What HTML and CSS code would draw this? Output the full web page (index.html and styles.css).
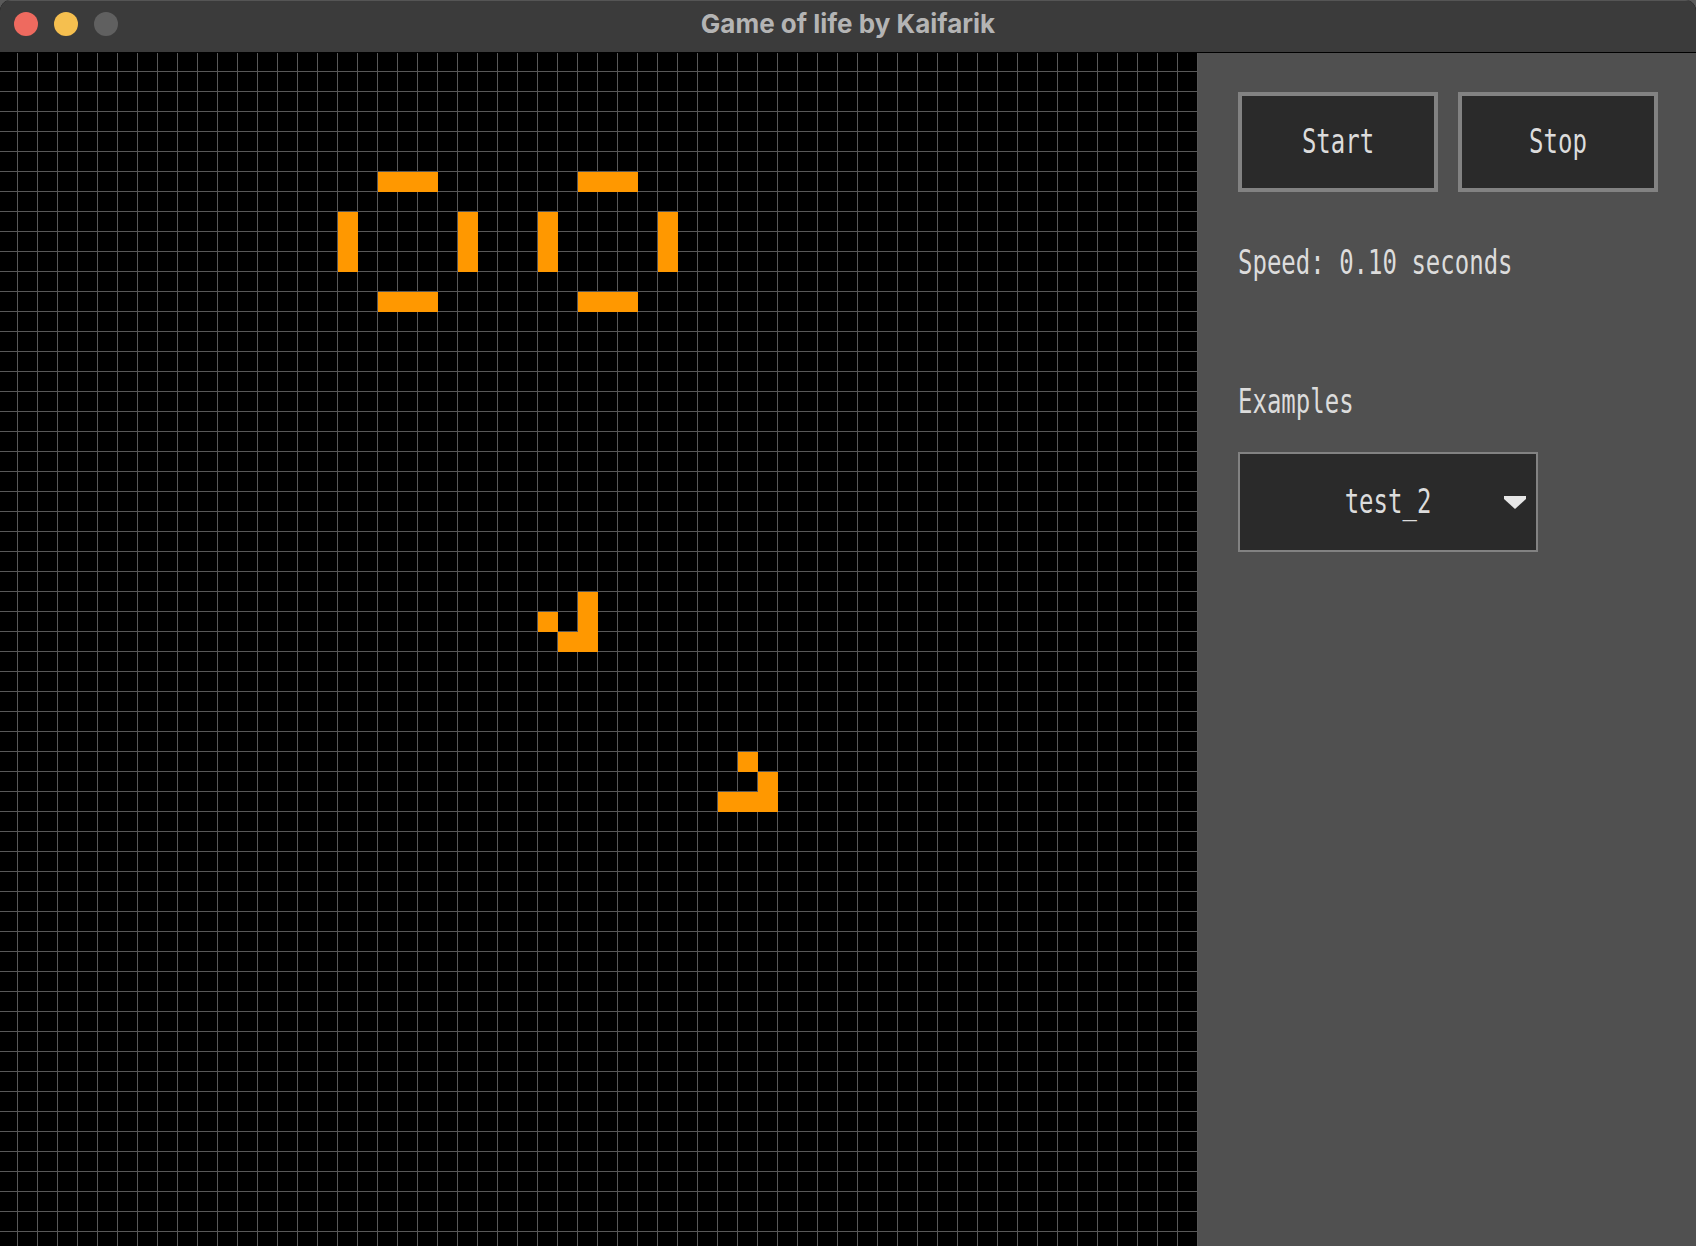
FILE: index.html
```html
<!DOCTYPE html>
<html>
<head>
<meta charset="utf-8">
<title>Game of life by Kaifarik</title>
<link rel="stylesheet" href="styles.css">
</head>
<body>
<div class="window">
  <div class="titlebar">
    <div class="lights">
      <span class="light red"></span>
      <span class="light yellow"></span>
      <span class="light gray"></span>
    </div>
    <div class="title">Game of life by Kaifarik</div>
  </div>
  <div class="content">
    <div class="board">
      <svg class="cells" width="1198" height="1193" viewBox="0 0 1198 1193">
        <g fill="#ff9800">
          <!-- left oscillator -->
          <rect x="378" y="119" width="60" height="20"/>
          <rect x="338" y="159" width="20" height="60"/>
          <rect x="458" y="159" width="20" height="60"/>
          <rect x="378" y="239" width="60" height="20"/>
          <!-- right oscillator -->
          <rect x="578" y="119" width="60" height="20"/>
          <rect x="538" y="159" width="20" height="60"/>
          <rect x="658" y="159" width="20" height="60"/>
          <rect x="578" y="239" width="60" height="20"/>
          <!-- glider 1 -->
          <rect x="578" y="539" width="20" height="60"/>
          <rect x="558" y="579" width="20" height="20"/>
          <rect x="538" y="559" width="20" height="20"/>
          <!-- glider 2 -->
          <rect x="738" y="699" width="20" height="20"/>
          <rect x="758" y="719" width="20" height="40"/>
          <rect x="718" y="739" width="40" height="20"/>
        </g>
      </svg>
    </div>
    <div class="panel">
      <div class="buttons">
        <div class="btn"><span class="pix">Start</span></div>
        <div class="btn"><span class="pix">Stop</span></div>
      </div>
      <div class="label speed"><span class="pix">Speed: 0.10 seconds</span></div>
      <div class="label examples"><span class="pix">Examples</span></div>
      <div class="select">
        <span class="pix">test_2</span>
        <svg class="arrow" width="22" height="13" viewBox="0 0 22 13">
          <polygon points="0,0 22,0 22,3 11,13 0,3" fill="#e6e6e6"/>
        </svg>
      </div>
    </div>
  </div>
</div>
</body>
</html>
```
FILE: styles.css
```css
html, body {
  margin: 0;
  padding: 0;
  background: #5a5a5a;
}
.window {
  width: 1696px;
  height: 1246px;
  display: flex;
  flex-direction: column;
  overflow: hidden;
  border-radius: 11px 11px 0 0;
  background: #000;
}
.titlebar {
  height: 52px;
  flex: 0 0 52px;
  background: #3b3b3b;
  border-bottom: 1px solid #000;
  position: relative;
  display: flex;
  align-items: center;
  justify-content: center;
  box-shadow: inset 0 1px 0 #555;
}
.lights {
  position: absolute;
  left: 14px;
  top: 12px;
  display: flex;
  gap: 16px;
}
.light {
  width: 24px;
  height: 24px;
  border-radius: 50%;
  display: block;
}
.red { background: #ee6a5f; }
.yellow { background: #f5bf4f; }
.gray { background: #606060; }
.title {
  font-family: Inter, "Noto Sans", sans-serif;
  font-weight: 700;
  font-size: 26px;
  color: #b4b4b4;
  line-height: 52px;
  margin-top: -4px;
}
.content {
  flex: 1;
  display: flex;
  min-height: 0;
}
.board {
  width: 1198px;
  flex: 0 0 1198px;
  background-color: #000;
  background-image:
    linear-gradient(to right, #585858 1px, transparent 1px),
    linear-gradient(to bottom, #585858 1px, transparent 1px);
  background-size: 20px 20px;
  background-position: 17px 18px;
  overflow: hidden;
}
.cells { display: block; }
.panel {
  flex: 1;
  background: #505050;
  padding: 39px 0 0 40px;
  display: flex;
  flex-direction: column;
  align-items: flex-start;
}
.pix {
  display: inline-block;
  font-family: "DejaVu Sans Mono", "Liberation Mono", monospace;
  font-size: 24px;
  line-height: 28px;
  height: 28px;
  color: #dcdcdc;
  transform: scaleY(1.4);
  transform-origin: center;
  white-space: pre;
}
.buttons {
  display: flex;
  gap: 20px;
}
.btn {
  width: 192px;
  height: 92px;
  border: 4px solid #828282;
  background: #2a2a2a;
  display: flex;
  align-items: center;
  justify-content: center;
}
.label {
  height: 28px;
}
.speed { margin-top: 57px; }
.examples { margin-top: 111px; }
.select {
  margin-top: 36px;
  width: 296px;
  height: 96px;
  border: 2px solid #828282;
  background: #2a2a2a;
  position: relative;
  display: flex;
  align-items: center;
  justify-content: center;
}
.arrow {
  position: absolute;
  right: 10px;
  top: 42px;
}
```
